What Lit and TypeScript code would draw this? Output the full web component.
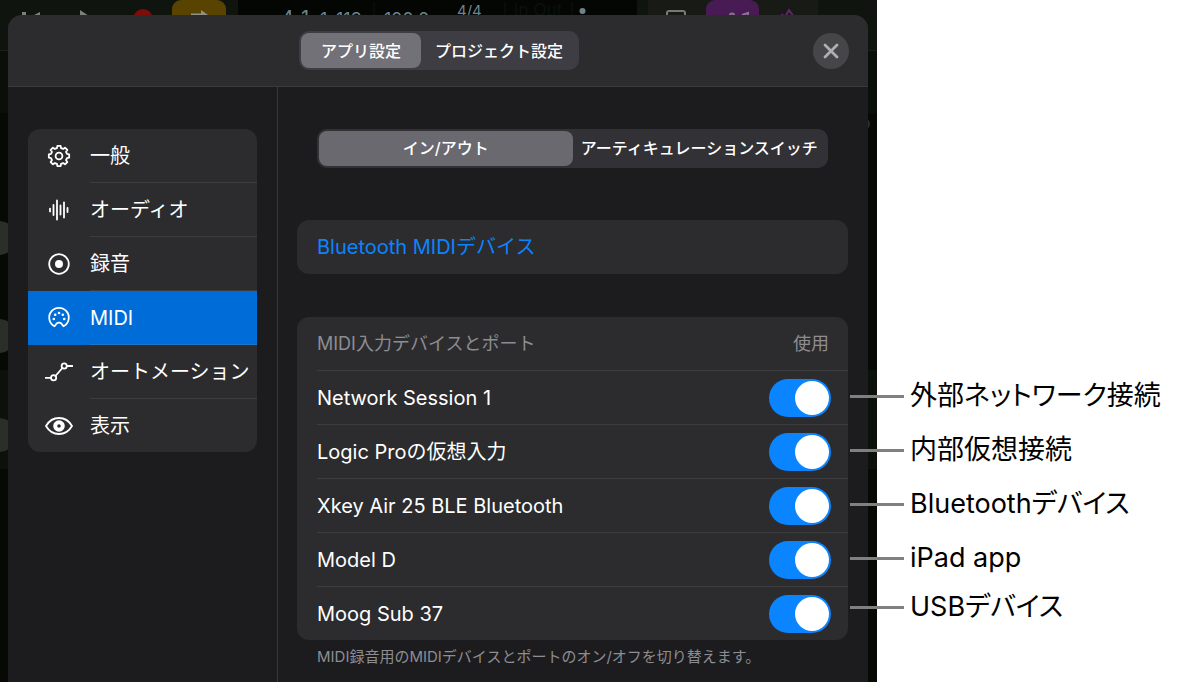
import { LitElement, html, css, svg } from "lit";
import { customElement, state } from "lit/decorators.js";
import { classMap } from "lit/directives/class-map.js";

const gearPath = (() => {
  const teeth = 8;
  const points: string[] = [];
  for (let i = 0; i < teeth; i++) {
    const base = (i / teeth) * Math.PI * 2 - Math.PI / 2;
    const steps: [number, number][] = [[-0.25, 8.2], [-0.16, 10.3], [0.16, 10.3], [0.25, 8.2]];
    for (const [offset, r] of steps) {
      points.push(`${(14 + r * Math.cos(base + offset)).toFixed(2)} ${(14 + r * Math.sin(base + offset)).toFixed(2)}`);
    }
  }
  return `M${points.join("L")}Z`;
})();

const icons: Record<string, unknown> = {
  gear: svg`<path d=${gearPath} /><circle cx="14" cy="14" r="3.4" />`,
  wave: svg`<path d="M5 12.6v2.8M8.5 9v10M12 4.5v19M15.5 9.5v9M19 6.5v15M22.5 12v4" />`,
  record: svg`<circle cx="14" cy="14" r="9.8" /><circle class="solid" cx="14" cy="14" r="4" />`,
  midi: svg`<path d="M9.500 22.300a9.800 9.800 0 1 1 9 0l-2-2.600c-1.400-1.500-3.600-1.500-5 0z" />
    <circle class="solid" cx="8.8" cy="15" r="1.3" /><circle class="solid" cx="10.2" cy="10.8" r="1.3" />
    <circle class="solid" cx="14" cy="9" r="1.3" /><circle class="solid" cx="17.8" cy="10.8" r="1.3" />
    <circle class="solid" cx="19.2" cy="15" r="1.3" />`,
  automation: svg`<path d="M.5 19.8H6M10.4 18 17.4 10M21.800 8H27.500" /><circle cx="8.6" cy="19.8" r="2.6" /><circle cx="19.2" cy="8" r="2.6" />`,
  eye: svg`<path d="M1 14C4 8.8 8.7 6 14 6s10 2.8 13 8c-3 5.2-7.7 8-13 8S4 19.2 1 14z" /><circle class="ring" cx="14" cy="14" r="3.8" />`,
};

const sections = [
  { id: "general", label: "一般", icon: "gear" },
  { id: "audio", label: "オーディオ", icon: "wave" },
  { id: "recording", label: "録音", icon: "record" },
  { id: "midi", label: "MIDI", icon: "midi" },
  { id: "automation", label: "オートメーション", icon: "automation" },
  { id: "view", label: "表示", icon: "eye" },
];

const ports = [
  { id: "network", label: "Network Session 1", note: "外部ネットワーク接続" },
  { id: "virtual", label: "Logic Proの仮想入力", note: "内部仮想接続" },
  { id: "xkey", label: "Xkey Air 25 BLE Bluetooth", note: "Bluetoothデバイス" },
  { id: "modeld", label: "Model D", note: "iPad app" },
  { id: "moog", label: "Moog Sub 37", note: "USBデバイス" },
];

@customElement("app-root")
export class AppRoot extends LitElement {
  @state() private scope = 0;
  @state() private tab = 0;
  @state() private section = "midi";

  static styles = css`
    :host {
      display: block;
      min-height: 100vh;
      background: #fff;
      font-family: Inter, "Noto Sans CJK JP", sans-serif;
      font-size: 20px;
      line-height: 24px;
      color: #fff;
    }
    * { box-sizing: border-box; }
    button { margin: 0; padding: 0; border: 0; background: none; color: inherit; font: inherit; cursor: pointer; }

    .page { display: grid; grid-template-columns: minmax(0, 1fr) 27px 309px; align-items: start; }
    .screen { grid-area: 1 / 1 / 2 / 3; display: grid; background: #060904; overflow: hidden; }
    .backdrop, .panel { grid-area: 1 / 1; }
    .backdrop { width: 100%; height: 100%; min-height: 0; contain: size; }
    .panel { margin: 15px 9px 0 8px; border-radius: 14px 14px 0 0; background: #1c1c1e; overflow: hidden; z-index: 1; }

    .header {
      display: grid;
      grid-template-columns: 1fr auto 1fr;
      align-items: center;
      height: 72px;
      padding: 0 19px 0 21px;
      background: #2c2c2e;
      border-bottom: 1px solid #3a3a3c;
    }
    .segmented { display: flex; padding: 2px; border-radius: 10px; background: #3e3d43; font-size: 16px; font-weight: 500; }
    .segmented button { height: 35px; padding: 0 14px; border-radius: 8px; white-space: nowrap; }
    .segmented button.on { padding: 0 20px; background: #727177; }
    .segmented.wide { display: grid; grid-template-columns: 1fr 1fr; margin: 0 20px; background: #323136; }
    .segmented.wide button { padding: 0 0 2px; }
    .segmented.wide button.on { background: #6a696f; }
    .header .segmented { grid-column: 2; }
    .close {
      justify-self: end;
      display: grid;
      place-items: center;
      width: 36px;
      height: 36px;
      border-radius: 50%;
      background: #464649;
    }
    .close svg { width: 16px; height: 16px; stroke: #aeaeb4; stroke-width: 2.8; stroke-linecap: round; }

    .body { display: grid; grid-template-columns: 270px minmax(0, 1fr); }
    .sidebar { padding: 42px 20px; border-right: 1px solid #38383a; }
    .card, .sections { border-radius: 12px; background: #2c2c2e; overflow: hidden; }
    .sections { margin: 0; padding: 0; list-style: none; }
    .section { display: grid; grid-template-columns: 62px 1fr; align-items: stretch; width: 100%; height: 54px; text-align: left; white-space: nowrap; }
    .section.on { background: #006cd8; }
    .section svg {
      align-self: center;
      width: 28px;
      height: 28px;
      margin-left: 17px;
      fill: none;
      stroke: #fff;
      stroke-width: 1.8;
      stroke-linecap: round;
      stroke-linejoin: round;
    }
    .section .solid { fill: #fff; stroke: none; }
    .section .ring { stroke-width: 4; }
    .section span { display: flex; align-items: center; border-bottom: 1px solid #3d3d40; }
    .section.on span { border-color: #1e74c8; }
    li:last-child .section { height: 53px; }
    li:last-child .section span { border-bottom: 0; }

    .detail { padding: 42px 20px 15px 19px; }
    .link { display: block; width: 100%; height: 54px; margin-top: 52px; padding: 0 20px; text-align: left; color: #0a84ff; }
    .ports { margin-top: 43px; padding-left: 20px; }
    .row {
      display: flex;
      align-items: center;
      justify-content: space-between;
      height: 54px;
      padding-right: 17px;
      border-bottom: 1px solid #3d3d40;
    }
    .row:last-child { height: 53px; border-bottom: 0; }
    .row.head { padding-right: 19px; font-size: 18px; color: #8d8d93; }
    .toggle {
      appearance: none;
      width: 62px;
      height: 38px;
      margin: 0;
      padding: 2px;
      border-radius: 19px;
      background: #39393d;
      cursor: pointer;
    }
    .toggle::before { content: ""; display: block; width: 34px; height: 34px; border-radius: 50%; background: #fff; }
    .toggle:checked { padding-left: 26px; background: #0a84ff; }
    .footnote { margin: 7px 0 0; padding: 0 20px; font-size: 15px; line-height: 20px; color: #8d8d93; }

    .notes {
      grid-area: 1 / 2 / 2 / 4;
      z-index: 2;
      display: grid;
      grid-template-rows: repeat(4, 54px) 44px;
      margin: 0;
      padding: 369px 0 0;
      list-style: none;
      color: #000;
      font-size: 27px;
      font-weight: 400;
      font-feature-settings: "palt";
    }
    .notes li { display: flex; align-items: center; gap: 6px; white-space: nowrap; }
    .notes li::before { content: ""; width: 54px; height: 3px; background: #808080; }
  `;

  private backdrop() {
    return html`<svg class="backdrop" viewBox="0 0 877 682" preserveAspectRatio="xMinYMin slice" aria-hidden="true">
      <rect width="877" height="50" fill="#10140f" />
      <rect y="50" width="877" height="1" fill="#1b1f19" />
      <rect y="51" width="877" height="62" fill="#0b0f0a" />
      <rect y="370" width="877" height="99" fill="#0c110a" />
      <g fill="#2a2f29">
        <rect x="-30" y="221" width="46" height="34" rx="17" />
        <rect x="-30" y="319" width="46" height="34" rx="17" />
        <rect x="-30" y="418" width="46" height="34" rx="17" />
        <circle cx="864" cy="124" r="6" />
      </g>
      <path d="M22 12h4v8h-4zM40 12v8l-8-4zM80 10l12 8-12 8z" fill="#7d807c" />
      <circle cx="143" cy="19" r="10" fill="#7c0d08" />
      <rect x="172" width="54" height="30" rx="9" fill="#594300" />
      <path d="M191 15h11" stroke="#8f9189" stroke-width="3" /><path d="M201 10l7 5-7 5z" fill="#8f9189" />
      <rect x="238" y="-8" width="399" height="40" rx="9" fill="#030603" />
      <g fill="#6c858c">
        <text x="281" y="25" font-size="20">4</text><text x="301" y="25" font-size="20">1</text>
        <text x="320" y="26" font-size="18">1</text><text x="336" y="26" font-size="18">113</text>
        <text x="384" y="26" font-size="18">120.0</text>
        <text x="457" y="16" font-size="15">4/4</text>
        <circle cx="582.5" cy="11" r="3" />
      </g>
      <path d="M374 2v13M505 2v13M572 2v13" stroke="#0d140e" />
      <text x="514" y="16" font-size="17" fill="#0a110c">In Out</text>
      <rect x="648" y="-8" width="170" height="40" rx="9" fill="#171a15" />
      <rect x="667" y="11" width="18" height="14" rx="2" fill="none" stroke="#777a74" stroke-width="2" />
      <rect x="706" width="53" height="30" rx="9" fill="#481b55" />
      <path d="M730 15c0-2 4-2 4 0M742 15l6-2v3" fill="none" stroke="#8b748f" stroke-width="2" />
      <path d="M782 14l1 2M785 17l4-7 5 7" fill="none" stroke="#62266f" stroke-width="2" />
    </svg>`;
  }

  render() {
    const scopes = ["アプリ設定", "プロジェクト設定"];
    const tabs = ["イン/アウト", "アーティキュレーションスイッチ"];
    return html`
      <main class="page">
        <div class="screen">
          ${this.backdrop()}
          <section class="panel">
            <header class="header">
              <div class="segmented">
                ${scopes.map((label, i) => html`<button class=${classMap({ on: this.scope === i })} aria-pressed=${this.scope === i} @click=${() => (this.scope = i)}>${label}</button>`)}
              </div>
              <button class="close" aria-label="閉じる"><svg viewBox="0 0 16 16"><path d="M2 2l12 12M14 2 2 14" /></svg></button>
            </header>
            <div class="body">
              <nav class="sidebar">
                <ul class="sections">
                  ${sections.map((s) => html`<li>
                    <button class=${classMap({ section: true, on: this.section === s.id })} @click=${() => (this.section = s.id)}>
                      <svg viewBox="0 0 28 28" aria-hidden="true">${icons[s.icon]}</svg><span>${s.label}</span>
                    </button>
                  </li>`)}
                </ul>
              </nav>
              <div class="detail">
                <div class="segmented wide">
                  ${tabs.map((label, i) => html`<button class=${classMap({ on: this.tab === i })} aria-pressed=${this.tab === i} @click=${() => (this.tab = i)}>${label}</button>`)}
                </div>
                <button class="card link">Bluetooth MIDIデバイス</button>
                <div class="card ports">
                  <div class="row head"><span>MIDI入力デバイスとポート</span><span>使用</span></div>
                  ${ports.map((p) => html`<div class="row">
                    <label for=${p.id}>${p.label}</label>
                    <input class="toggle" id=${p.id} type="checkbox" role="switch" checked />
                  </div>`)}
                </div>
                <p class="footnote">MIDI録音用のMIDIデバイスとポートのオン/オフを切り替えます。</p>
              </div>
            </div>
          </section>
        </div>
        <ul class="notes">
          ${ports.map((p) => html`<li>${p.note}</li>`)}
        </ul>
      </main>
    `;
  }
}
